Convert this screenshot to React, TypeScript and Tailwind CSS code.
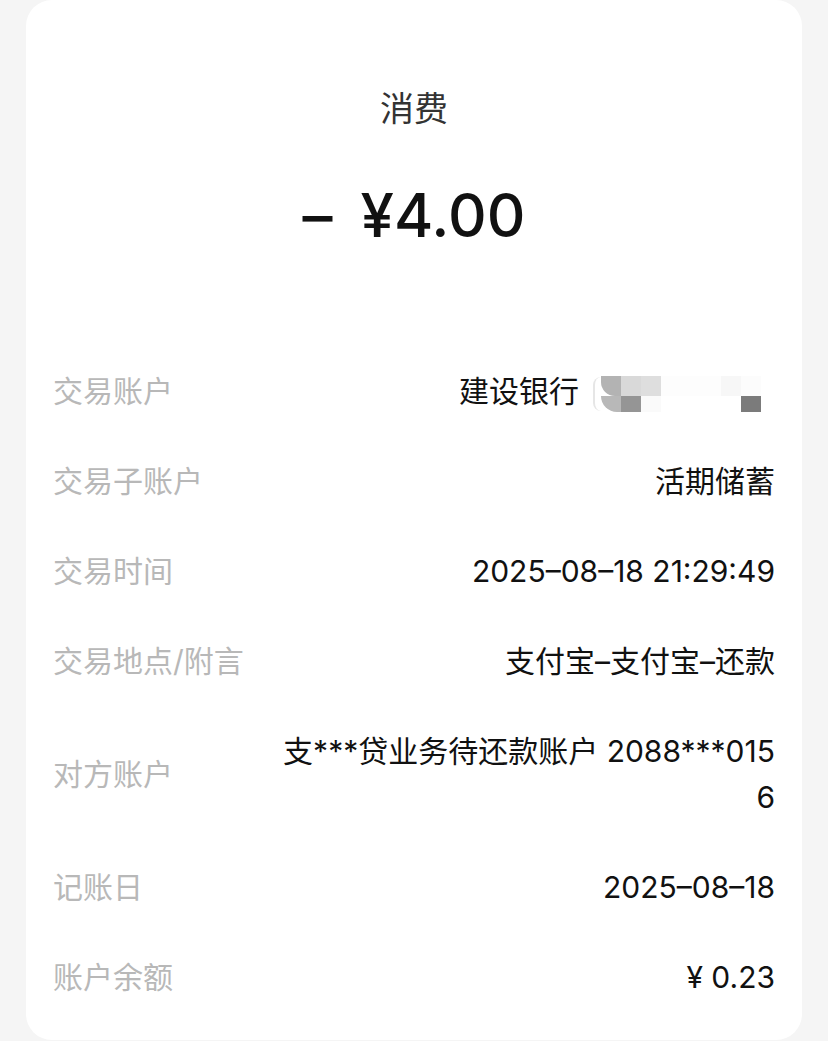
import React from 'react';

type Row = { label: string; value: React.ReactNode };

const font = { fontFamily: '"Inter", "Noto Sans CJK SC", sans-serif' };

function MaskedCard() {
  // pixelated mosaic over the card number
  return (
    <span className="inline-flex items-center ml-[14px] mr-[14px] h-[36px] relative top-[3px]">
      <span className="w-[8px] h-[34px] rounded-l-full border-l-2 border-[#e6e6e6]" />
      <span className="grid grid-cols-[20px_20px_20px] grid-rows-[20px_16px]">
        <span className="bg-[#b3b3b3] rounded-bl-[14px]" />
        <span className="bg-[#d9d9d9]" />
        <span className="bg-[#dedede]" />
        <span className="bg-[#b8b8b8] rounded-bl-[16px]" />
        <span className="bg-[#959595]" />
        <span className="bg-[#fafafa]" />
      </span>
      <span className="w-[100px] h-[36px] flex flex-col">
        <span className="h-[20px] flex">
          <span className="w-[60px] bg-[#fdfdfd]" />
          <span className="w-[20px] bg-[#f7f7f7]" />
          <span className="w-[20px] bg-[#fcfcfc]" />
        </span>
        <span className="h-[16px] flex">
          <span className="w-[80px]" />
          <span className="w-[20px] bg-[#7b7b7b]" />
        </span>
      </span>
    </span>
  );
}

const rows: Row[] = [
  { label: '交易账户', value: <span className="inline-flex items-center">建设银行<MaskedCard /></span> },
  { label: '交易子账户', value: '活期储蓄' },
  { label: '交易时间', value: '2025–08–18 21:29:49' },
  { label: '交易地点/附言', value: '支付宝–支付宝–还款' },
  {
    label: '对方账户',
    value: (
      <>
        支***贷业务待还款账户 2088***015
        <br />6
      </>
    ),
  },
  { label: '记账日', value: '2025–08–18' },
  { label: '账户余额', value: '¥ 0.23' },
];

export default function App() {
  return (
    <div className="h-[1041px] w-[828px] overflow-hidden bg-[#f5f5f5]" style={font}>
      <div className="mx-[26px] h-[1040px] rounded-[26px] bg-white">
        <div className="pt-[85px] text-center text-[34px] leading-[48px] text-[#333333]">消费</div>
        <div className="mt-[42px] text-center text-[60px] leading-[80px] font-medium text-[#111111]">
          <span className="mr-[12px]">–</span> ¥4.00
        </div>
        <div className="mt-[91px] px-[27px]">
          {rows.map((r) => (
            <div key={r.label} className="flex items-center justify-between py-[22px]">
              <div className="flex-none text-[30px] leading-[46px] text-[#b8b8b8]">{r.label}</div>
              <div className="w-[500px] text-right text-[30px] leading-[46px] text-[#111111]">{r.value}</div>
            </div>
          ))}
        </div>
      </div>
    </div>
  );
}
